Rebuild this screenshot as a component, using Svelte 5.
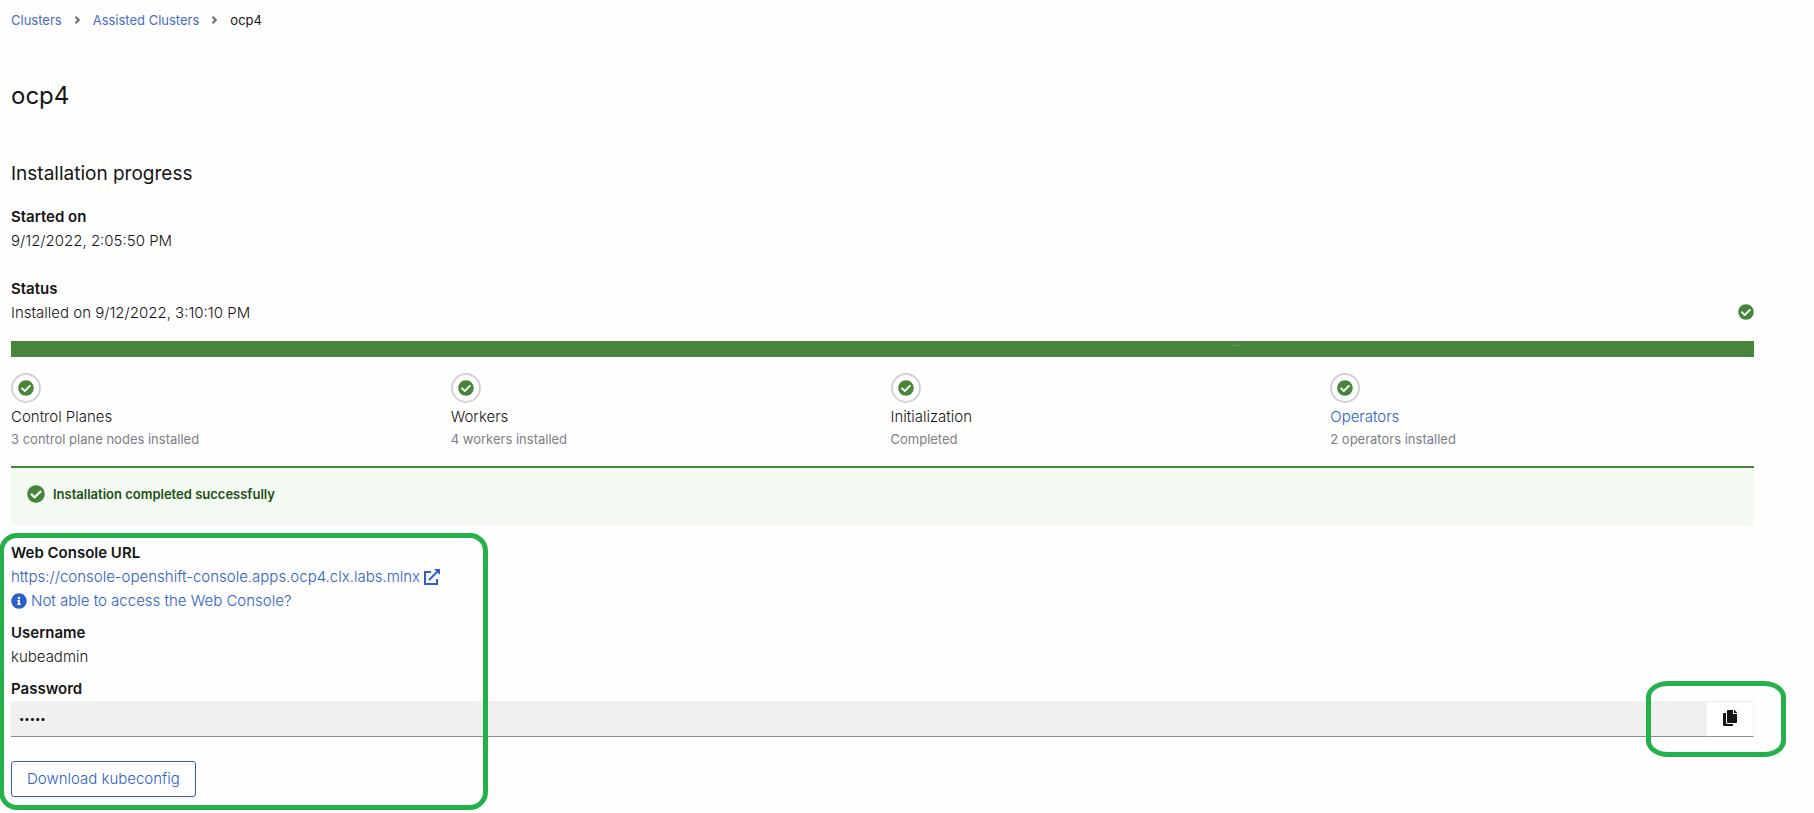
<script lang="ts">
  const checkPath =
    'M504 256c0 136.967-111.033 248-248 248S8 392.967 8 256 119.033 8 256 8s248 111.033 248 248zM227.314 387.314l184-184c6.248-6.248 6.248-16.379 0-22.627l-22.627-22.627c-6.248-6.249-16.379-6.249-22.628 0L216 308.118l-70.059-70.059c-6.248-6.248-16.379-6.248-22.628 0l-22.627 22.627c-6.248 6.248-6.248 16.379 0 22.627l104 104c6.249 6.249 16.379 6.249 22.628.001z';

  const steps = [
    { title: 'Control Planes', detail: '3 control plane nodes installed', link: false },
    { title: 'Workers', detail: '4 workers installed', link: false },
    { title: 'Initialization', detail: 'Completed', link: false },
    { title: 'Operators', detail: '2 operators installed', link: true }
  ];

  let password = $state('kubes');
</script>

{#snippet check(cls: string)}
  <svg class="check {cls}" viewBox="0 0 512 512" aria-hidden="true"><path d={checkPath} /></svg>
{/snippet}

{#snippet angle()}
  <svg class="angle" viewBox="0 0 6 8" aria-hidden="true"><path d="M1 0.8 4.3 4 1 7.2" /></svg>
{/snippet}

<main class="page">
  <nav class="breadcrumb" aria-label="Breadcrumb">
    <a href="#clusters">Clusters</a>
    {@render angle()}
    <a href="#assisted">Assisted Clusters</a>
    {@render angle()}
    <span>ocp4</span>
  </nav>

  <h1>ocp4</h1>
  <h2>Installation progress</h2>

  <dl class="facts">
    <div>
      <dt>Started on</dt>
      <dd>9/12/2022, 2:05:50 PM</dd>
    </div>
    <div>
      <dt>Status</dt>
      <dd class="status"><span>Installed on 9/12/2022, 3:10:10 PM</span>{@render check('')}</dd>
    </div>
  </dl>

  <div class="bar"><span class="tick"></span></div>

  <ul class="steps">
    {#each steps as step}
      <li>
        <span class="ring">{@render check('')}</span>
        {#if step.link}
          <a class="title" href="#operators">{step.title}</a>
        {:else}
          <span class="title">{step.title}</span>
        {/if}
        <small>{step.detail}</small>
      </li>
    {/each}
  </ul>

  <div class="alert">
    {@render check('large')}
    <strong>Installation completed successfully</strong>
  </div>

  <section class="access">
    <span class="mark credentials"></span>
    <div class="group">
      <h3>Web Console URL</h3>
      <a class="row" href="#console">
        <span>https://console-openshift-console.apps.ocp4.clx.labs.mlnx</span>
        <svg class="icon" viewBox="0 0 16 16" aria-hidden="true">
          <path d="M7 3H1v12h12v-5" fill="none" stroke="currentColor" stroke-width="2" />
          <path d="M5 11 13.5 2.5" fill="none" stroke="currentColor" stroke-width="2" />
          <path d="M10 0h6v6z" fill="currentColor" />
        </svg>
      </a>
      <button class="row help" type="button">
        <svg class="icon" viewBox="0 0 512 512" aria-hidden="true">
          <path
            fill="currentColor"
            d="M256 8C119.043 8 8 119.083 8 256c0 136.997 111.043 248 248 248s248-111.003 248-248C504 119.083 392.957 8 256 8zm0 110c23.196 0 42 18.804 42 42s-18.804 42-42 42-42-18.804-42-42 18.804-42 42-42zm56 254c0 6.627-5.373 12-12 12h-88c-6.627 0-12-5.373-12-12v-24c0-6.627 5.373-12 12-12h12v-64h-12c-6.627 0-12-5.373-12-12v-24c0-6.627 5.373-12 12-12h64c6.627 0 12 5.373 12 12v100h12c6.627 0 12 5.373 12 12v24z"
          />
        </svg>
        <span>Not able to access the Web Console?</span>
      </button>
    </div>
    <div class="group">
      <h3>Username</h3>
      <p>kubeadmin</p>
    </div>
    <div class="group">
      <label for="password">Password</label>
      <div class="field">
        <input id="password" type="password" readonly bind:value={password} />
        <button class="copy" type="button" aria-label="Copy password">
          <svg viewBox="0 0 448 512" aria-hidden="true">
            <path
              d="M320 448v40c0 13.255-10.745 24-24 24H24c-13.255 0-24-10.745-24-24V120c0-13.255 10.745-24 24-24h72v296c0 30.879 25.121 56 56 56h168zm0-344V0H152c-13.255 0-24 10.745-24 24v368c0 13.255 10.745 24 24 24h272c13.255 0 24-10.745 24-24V128H344c-13.2 0-24-10.8-24-24zm120.971-31.029L375.029 7.029A24 24 0 0 0 358.059 0H352v96h96v-6.059a24 24 0 0 0-7.029-16.97z"
            />
          </svg>
          <span class="mark around-copy"></span>
        </button>
      </div>
    </div>
    <button class="download" type="button">Download kubeconfig</button>
  </section>
</main>

<style>
  :global(body) {
    margin: 0;
    background: #fefefe;
  }
  .page {
    padding: 10px 60px 16px 11px;
    font-family: Inter, 'Open Sans', sans-serif;
    font-size: 15px;
    font-weight: 300;
    line-height: 24px;
    color: #151515;
  }
  h1, h2, h3, p, dl, dd, ul {
    margin: 0;
    padding: 0;
  }
  a {
    color: #2b60cc;
    text-decoration: none;
  }
  .breadcrumb {
    display: flex;
    align-items: center;
    gap: 12px;
    font-size: 13px;
    font-weight: 400;
    line-height: 20px;
  }
  .breadcrumb a {
    color: #4a6bcb;
  }
  .angle {
    width: 7px;
    height: 8px;
    fill: none;
    stroke: #6a6e73;
    stroke-width: 2;
  }
  h1 {
    margin-top: 50px;
    font-size: 24px;
    font-weight: 400;
    line-height: 32px;
  }
  h2 {
    margin-top: 46px;
    font-size: 19px;
    font-weight: 400;
    line-height: 32px;
  }
  .facts {
    display: grid;
    gap: 24px;
    margin-top: 15px;
  }
  dt, h3, label {
    display: block;
    font-size: 15px;
    font-weight: 600;
  }
  .status {
    display: flex;
    justify-content: space-between;
  }
  .check {
    flex: none;
    width: 16px;
    height: 16px;
    fill: #46853a;
  }
  .status .check {
    margin-top: 3px;
  }
  .check.large {
    width: 18px;
    height: 18px;
  }
  .bar {
    position: relative;
    height: 16px;
    margin-top: 16px;
    background: #46853a;
  }
  .tick {
    position: absolute;
    top: 4px;
    left: 70%;
    width: 8px;
    height: 1px;
    background: #6b9d61;
  }
  .steps {
    display: grid;
    grid-template-columns: repeat(4, 1fr);
    gap: 16px;
    margin-top: 16px;
    list-style: none;
  }
  .steps li {
    display: flex;
    flex-direction: column;
    align-items: flex-start;
  }
  .ring {
    display: grid;
    place-items: center;
    box-sizing: border-box;
    width: 30px;
    height: 30px;
    margin-bottom: 2px;
    border: 2px solid #d2d2d2;
    border-radius: 50%;
  }
  small {
    font-size: 13px;
    font-weight: 400;
    line-height: 20px;
    color: #7b7f84;
  }
  .alert {
    display: flex;
    align-items: center;
    gap: 8px;
    box-sizing: border-box;
    height: 59px;
    margin-top: 17px;
    padding: 0 16px 6px;
    border-top: 2px solid #46853a;
    background: #f3faf2;
    color: #1e4f18;
    font-size: 13px;
  }
  .alert strong {
    font-weight: 600;
  }
  .access {
    position: relative;
    display: grid;
    gap: 8px;
    margin-top: 16px;
  }
  .row {
    display: flex;
    align-items: center;
    gap: 4px;
    width: fit-content;
  }
  .icon {
    width: 16px;
    height: 16px;
  }
  button, input {
    font: inherit;
  }
  .help {
    padding: 0;
    border: 0;
    background: none;
    color: #2b60cc;
  }
  .field {
    display: flex;
    height: 36px;
  }
  input {
    box-sizing: border-box;
    flex: 1;
    min-width: 0;
    padding: 0 8px 2px;
    border: 0;
    border-bottom: 1px solid #8a8d90;
    border-radius: 0;
    background: #f0f0f0;
    color: #151515;
    font-size: 10px;
    font-weight: 500;
    outline: none;
  }
  .copy {
    position: relative;
    display: grid;
    place-items: center;
    box-sizing: border-box;
    width: 48px;
    padding: 0 0 2px;
    border: 1px solid #f0f0f0;
    border-bottom-color: #8a8d90;
    background: #fff;
  }
  .copy svg {
    width: 14px;
    height: 16px;
    fill: #151515;
  }
  .download {
    width: fit-content;
    height: 36px;
    margin-top: 16px;
    padding: 0 15px;
    border: 1px solid #2b60cc;
    border-radius: 3px;
    background: #fff;
    color: #2b60cc;
  }
  .mark {
    position: absolute;
    box-sizing: border-box;
    border: 5px solid #24b14c;
    pointer-events: none;
  }
  .credentials {
    inset: -8px auto -13px -12px;
    width: 489px;
    border-radius: 18px;
  }
  .around-copy {
    inset: -21px -33px -21px -61px;
    border-radius: 22px / 16px;
  }
</style>
